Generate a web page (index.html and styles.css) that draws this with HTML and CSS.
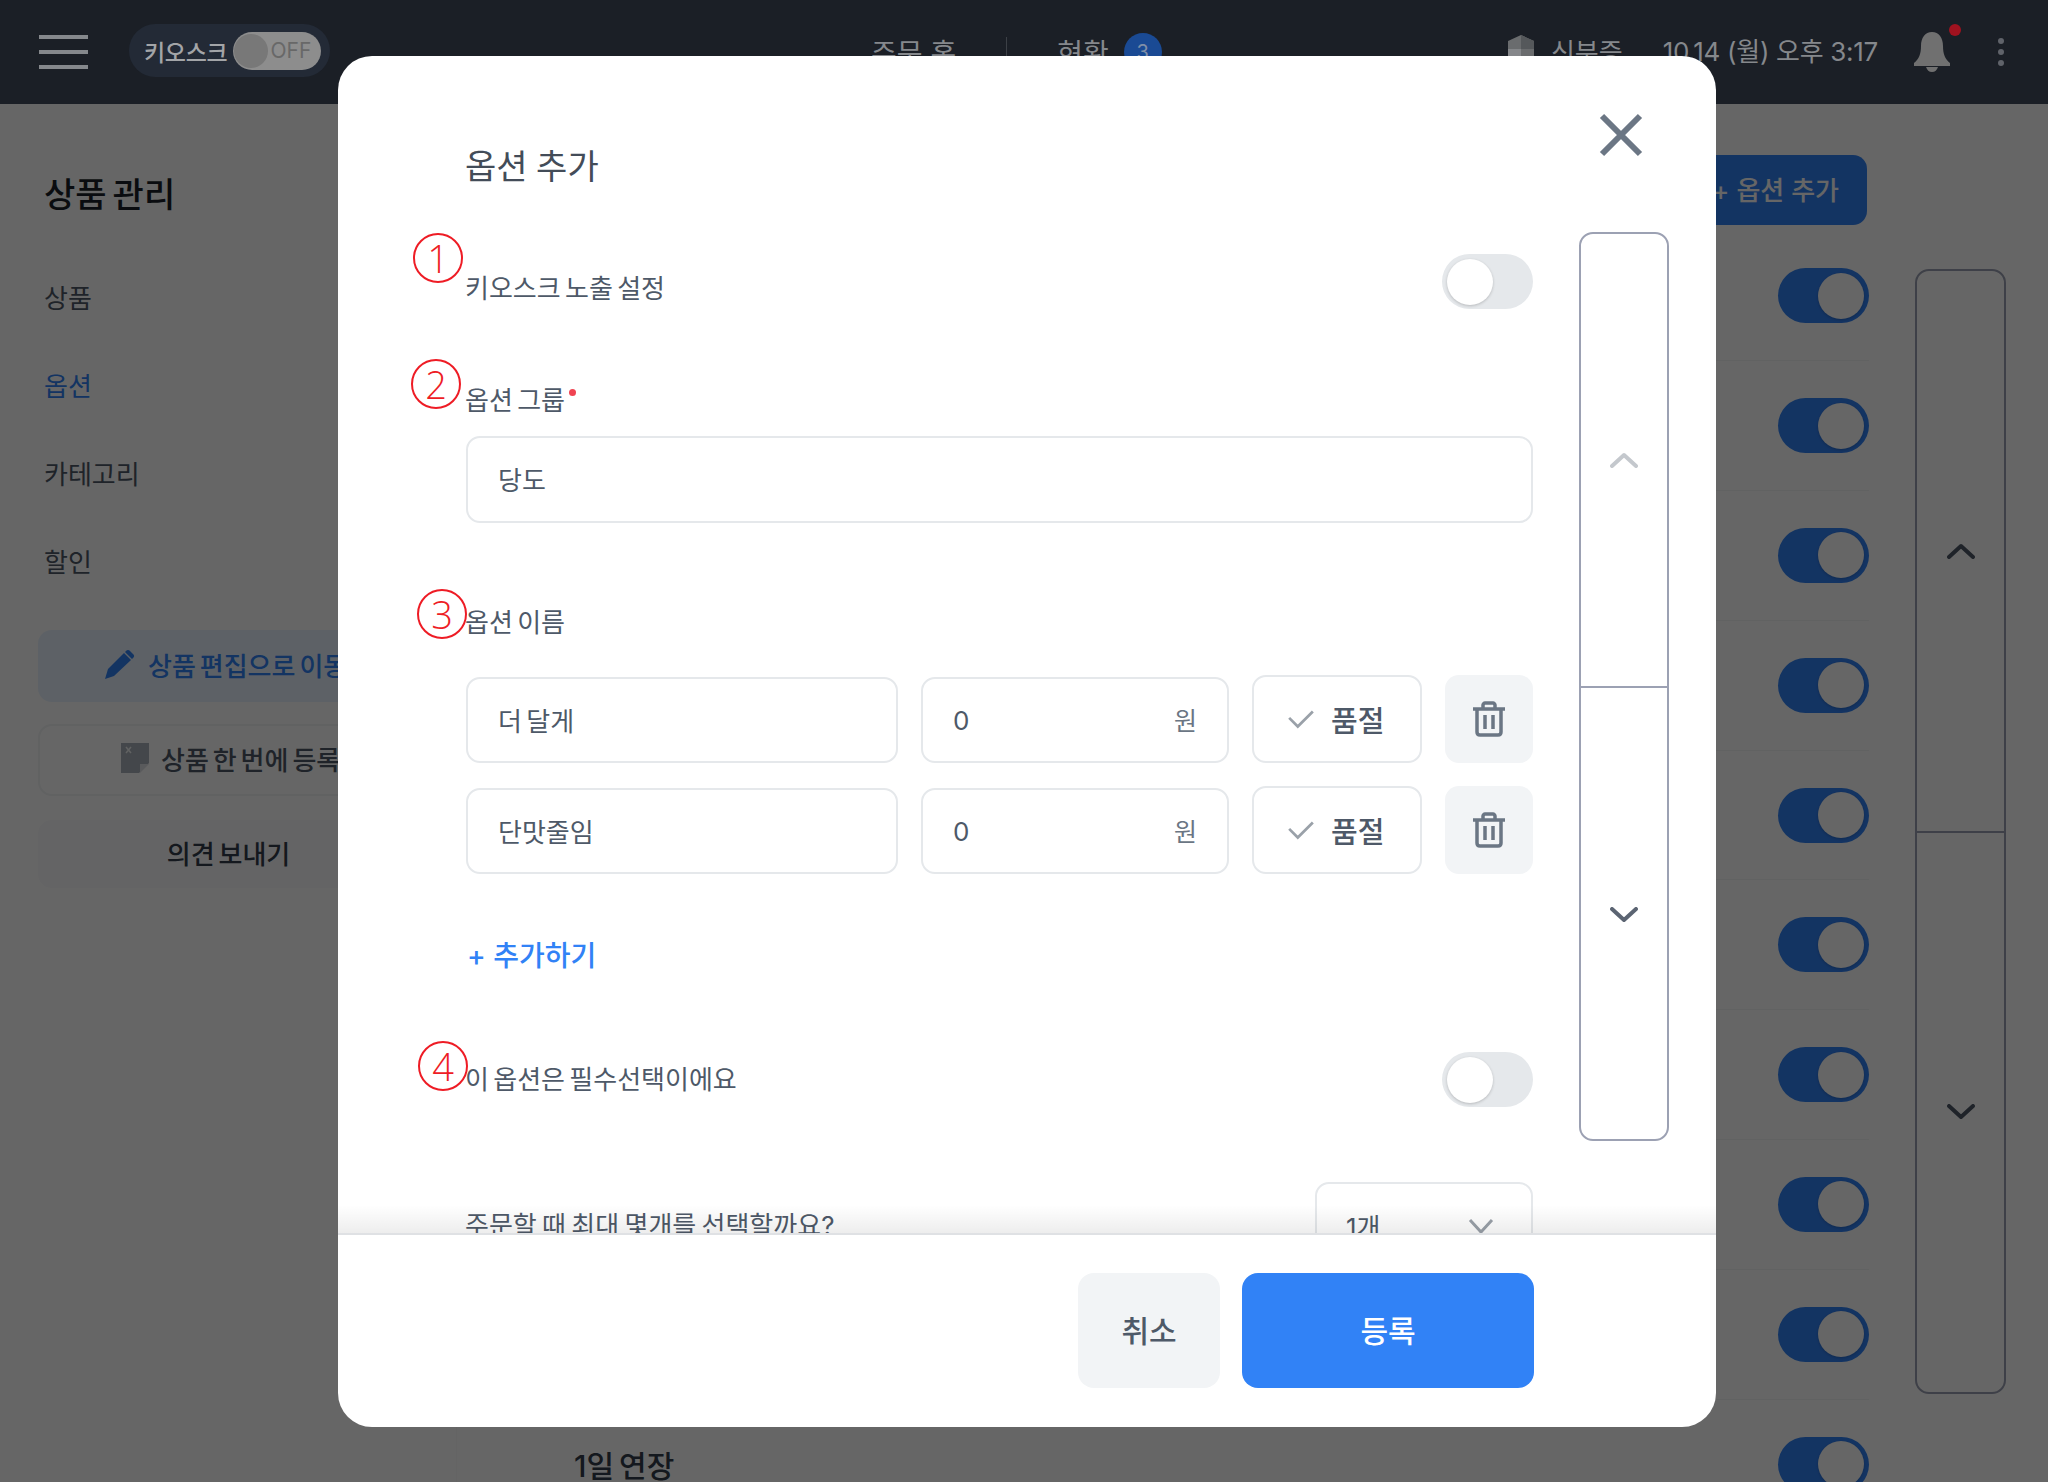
FILE: index.html
```html
<!DOCTYPE html>
<html lang="ko">
<head>
  <meta charset="UTF-8">
  <meta name="viewport" content="width=device-width, initial-scale=1.0">
  <title>옵션 추가</title>
  <link rel="stylesheet" href="styles.css">
</head>
<body>
  <div class="page">
    <header class="topbar">
      <div class="topbar-left">
        <div class="menu-icon"><span></span><span></span><span></span></div>
        <div class="kiosk-pill">
          <span class="kiosk-label">키오스크</span>
          <span class="kiosk-switch"><span class="kiosk-knob"></span><span class="kiosk-off">OFF</span></span>
        </div>
      </div>
      <nav class="topbar-center">
        <span class="nav-item">주문 홈</span>
        <span class="nav-sep"></span>
        <span class="nav-item">현황</span>
        <span class="nav-badge">3</span>
      </nav>
      <div class="topbar-right">
        <svg class="store-icon" viewBox="0 0 26 30">
          <path d="M13 0 26 6v16l-13 8L0 22V6z" fill="#6a6c6e"/>
          <path d="M13 0 26 6v8H13z" fill="#55585b"/>
          <path d="M0 14h13v16L0 22z" fill="#85878a"/>
        </svg>
        <span class="status-text">신분증</span>
        <span class="clock">10.14 (월) 오후 3:17</span>
        <span class="bell">
          <svg viewBox="0 0 38 40">
            <path d="M19 0c7 0 11 6 11 14 0 8 2 13 7 17v3H1v-3c5-4 7-9 7-17C8 6 12 0 19 0z" fill="#707070"/>
            <path d="M13 35h12c-1 3-3 5-6 5s-5-2-6-5z" fill="#707070"/>
          </svg>
          <span class="bell-dot"></span>
        </span>
        <span class="more-dots"><span></span><span></span><span></span></span>
      </div>
    </header>

    <div class="layout">
      <aside class="sidebar">
        <h2 class="side-title">상품 관리</h2>
        <ul class="side-menu">
          <li>상품</li>
          <li class="active">옵션</li>
          <li>카테고리</li>
          <li>할인</li>
        </ul>
        <a class="side-btn side-btn-edit">
          <svg class="side-icon-pen" viewBox="0 0 30 30">
            <path d="M19 4 26 11 9 27 0 30 3 20z" fill="#3182f6"/>
            <path d="M21 2c1-1.500 3-1.500 4 0l3 3c1.500 1 1.500 3 0 4l-1 1-7-7z" fill="#3182f6"/>
          </svg>
          상품 편집으로 이동
        </a>
        <a class="side-btn side-btn-bulk">
          <svg class="side-icon-doc" viewBox="0 0 28 30">
            <path d="M0 0h28v20l-10 10H0z" fill="#aab2bb"/>
            <path d="M19 30V21h9z" fill="#dfe2e6"/>
            <path d="M5 4l5 6M10 4l-5 6" stroke="#f2f4f6" stroke-width="1.500"/>
          </svg>
          상품 한 번에 등록
        </a>
        <a class="side-btn side-btn-send">의견 보내기</a>
      </aside>

      <main class="content">
        <div class="content-list">
          <div class="list-head"><button class="add-btn">+ 옵션 추가</button></div>
          <div class="item-row"><span class="switch on"><i></i></span></div>
          <div class="item-row"><span class="switch on"><i></i></span></div>
          <div class="item-row"><span class="switch on"><i></i></span></div>
          <div class="item-row"><span class="switch on"><i></i></span></div>
          <div class="item-row"><span class="switch on"><i></i></span></div>
          <div class="item-row"><span class="switch on"><i></i></span></div>
          <div class="item-row"><span class="switch on"><i></i></span></div>
          <div class="item-row"><span class="switch on"><i></i></span></div>
          <div class="item-row"><span class="switch on"><i></i></span></div>
          <div class="item-row"><span class="item-name">1일 연장</span><span class="switch on"><i></i></span></div>
        </div>
        <div class="scroller scroller-page">
          <div class="scroller-part">
            <svg class="chevron chevron-dark" viewBox="0 0 28 16"><path d="M2 14 14 3l12 11"/></svg>
          </div>
          <div class="scroller-part">
            <svg class="chevron chevron-dark" viewBox="0 0 28 16"><path d="M2 2l12 11L26 2"/></svg>
          </div>
        </div>
      </main>
    </div>

    <div class="dim"></div>

    <section class="modal">
      <div class="modal-body">
        <form class="modal-form">
          <h1 class="modal-title">옵션 추가</h1>

          <div class="form-row form-row-first">
            <label class="form-label label-low">키오스크 노출 설정</label>
            <span class="switch"><i></i></span>
          </div>

          <label class="form-label group-label">옵션 그룹<span class="required"></span></label>
          <input class="field field-group" type="text" value="당도">

          <label class="form-label name-label">옵션 이름</label>
          <div class="option-row">
            <input class="field field-name" type="text" value="더 달게">
            <div class="field field-price"><span>0</span><span class="won">원</span></div>
            <button type="button" class="soldout-btn">
              <svg viewBox="0 0 26 18"><path d="M2 8l8 8L24 2"/></svg>
              품절
            </button>
            <button type="button" class="trash-btn">
              <svg viewBox="0 0 34 36">
                <path d="M11 7V4c0-1 1-2 2-2h8c1 0 2 1 2 2v3M1 8h32M5 9v22c0 2 1 3 3 3h18c2 0 3-1 3-3V9M13 14v14M21 14v14"/>
              </svg>
            </button>
          </div>
          <div class="option-row">
            <input class="field field-name" type="text" value="단맛줄임">
            <div class="field field-price"><span>0</span><span class="won">원</span></div>
            <button type="button" class="soldout-btn">
              <svg viewBox="0 0 26 18"><path d="M2 8l8 8L24 2"/></svg>
              품절
            </button>
            <button type="button" class="trash-btn">
              <svg viewBox="0 0 34 36">
                <path d="M11 7V4c0-1 1-2 2-2h8c1 0 2 1 2 2v3M1 8h32M5 9v22c0 2 1 3 3 3h18c2 0 3-1 3-3V9M13 14v14M21 14v14"/>
              </svg>
            </button>
          </div>

          <a class="add-link">+ 추가하기</a>

          <div class="form-row form-row-required">
            <label class="form-label">이 옵션은 필수선택이에요</label>
            <span class="switch"><i></i></span>
          </div>

          <div class="form-row form-row-max">
            <label class="form-label">주문할 때 최대 몇개를 선택할까요?</label>
            <div class="field field-select">
              <span>1개</span>
              <svg viewBox="0 0 26 16"><path d="M2 2l11 12L24 2"/></svg>
            </div>
          </div>
        </form>

        <div class="scroller scroller-modal">
          <div class="scroller-part">
            <svg class="chevron chevron-light" viewBox="0 0 28 16"><path d="M2 14 14 3l12 11"/></svg>
          </div>
          <div class="scroller-part">
            <svg class="chevron chevron-slate" viewBox="0 0 28 16"><path d="M2 2l12 11L26 2"/></svg>
          </div>
        </div>
        <div class="modal-fade"></div>
      </div>

      <footer class="modal-footer">
        <button class="footer-btn btn-cancel">취소</button>
        <button class="footer-btn btn-submit">등록</button>
      </footer>

      <button class="modal-close">
        <svg viewBox="0 0 44 44"><path d="M3 3l38 38M41 3 3 41"/></svg>
      </button>

      <!-- red numbered marks drawn over the form -->
      <span class="mark mark-1">1</span>
      <span class="mark mark-2">2</span>
      <span class="mark mark-3">3</span>
      <span class="mark mark-4">4</span>
    </section>
  </div>
</body>
</html>
```

FILE: styles.css
```css
* {
  box-sizing: border-box;
}
body {
  margin: 0;
  font-family: Inter, "Noto Sans CJK KR", sans-serif;
  color: #333d4b;
  background-color: #fff;
  word-spacing: -3px;
}
button, input {
  font-family: inherit;
  word-spacing: inherit;
}
.page {
  position: relative;
  width: 2048px;
  height: 1482px;
  overflow: hidden;
}

/* top bar */
.topbar {
  display: flex;
  align-items: center;
  height: 104px;
  background-color: #1b1f26;
  color: #85888c;
  font-size: 26px;
}
.topbar-left {
  display: flex;
  align-items: center;
  gap: 41px;
  padding-left: 39px;
}
.menu-icon {
  display: flex;
  flex-direction: column;
  gap: 11px;
  width: 49px;
}
.menu-icon span {
  height: 4px;
  background-color: #85888c;
}
.kiosk-pill {
  display: flex;
  align-items: center;
  gap: 6px;
  width: 201px;
  height: 53px;
  margin-bottom: 3px;
  padding-left: 15px;
  border-radius: 27px;
  background-color: #232a36;
}
.kiosk-label {
  font-size: 23px;
  font-weight: 500;
  letter-spacing: -0.3px;
  color: #a3a5a8;
  white-space: nowrap;
}
.kiosk-switch {
  display: flex;
  align-items: center;
  gap: 2px;
  width: 88px;
  height: 38px;
  padding-left: 1px;
  border-radius: 19px;
  background-color: #8d8d8d;
}
.kiosk-knob {
  width: 34px;
  height: 34px;
  border-radius: 50%;
  background-color: #787878;
}
.kiosk-off {
  font-size: 21px;
  color: #686868;
}
.topbar-center {
  display: flex;
  align-items: center;
  margin-left: 541px;
  font-size: 28px;
  word-spacing: 0;
}
.nav-item {
  white-space: nowrap;
}
.nav-sep {
  width: 1px;
  height: 30px;
  margin: 0 50px;
  background-color: #3c4046;
}
.nav-badge {
  width: 38px;
  height: 38px;
  margin-left: 15px;
  border-radius: 50%;
  background-color: #1a4a94;
  color: #7f8fa8;
  font-size: 20px;
  line-height: 38px;
  text-align: center;
}
.topbar-right {
  display: flex;
  align-items: center;
  margin-left: auto;
  padding-right: 44px;
}
.store-icon {
  width: 26px;
  height: 30px;
  margin: 0 2px 4px -2px;
}
.status-text {
  margin-left: 15px;
  padding-bottom: 4px;
}
.clock {
  margin-left: 40px;
  padding-bottom: 5px;
  letter-spacing: -0.3px;
  word-spacing: 0;
  white-space: nowrap;
}
.bell {
  position: relative;
  display: block;
  width: 38px;
  height: 40px;
  margin-left: 35px;
}
.bell svg {
  display: block;
  width: 38px;
  height: 40px;
}
.bell-dot {
  position: absolute;
  top: -8px;
  right: -10px;
  width: 12px;
  height: 12px;
  border-radius: 50%;
  background-color: #a0121f;
}
.more-dots {
  display: flex;
  flex-direction: column;
  gap: 5px;
  margin-left: 47px;
}
.more-dots span {
  width: 6px;
  height: 6px;
  border-radius: 50%;
  background-color: #60636a;
}

/* page underneath */
.layout {
  display: flex;
  height: 1378px;
}
.sidebar {
  flex: none;
  width: 457px;
  padding: 68px 38px 0;
  border-right: 1px solid #f9fafb;
}
.side-title {
  margin: 0 0 0 6px;
  font-size: 34px;
  font-weight: 500;
  line-height: 46px;
  color: #191f28;
}
.side-menu {
  margin: 63px 0 0 6px;
  padding: 0;
  list-style: none;
  font-size: 26px;
  color: #4e5968;
}
.side-menu li {
  height: 88px;
  line-height: 36px;
}
.side-menu li:last-child {
  height: 85px;
}
.side-menu li.active {
  color: #3182f6;
}
.side-btn {
  display: flex;
  align-items: center;
  width: 381px;
  padding-bottom: 4px;
  font-size: 26px;
  font-weight: 500;
  white-space: nowrap;
}
.side-btn-edit {
  height: 72px;
  padding-left: 67px;
  border-radius: 14px;
  background-color: #e8f3ff;
  color: #3182f6;
}
.side-icon-pen {
  width: 30px;
  height: 30px;
  margin-right: 13px;
}
.side-btn-bulk {
  height: 72px;
  margin-top: 22px;
  padding-left: 81px;
  border: 2px solid #f2f4f6;
  border-radius: 14px;
  color: #4e5968;
}
.side-icon-doc {
  width: 28px;
  height: 30px;
  margin-right: 12px;
}
.side-btn-send {
  justify-content: center;
  height: 68px;
  margin-top: 24px;
  border-radius: 14px;
  background-color: #fbfbfc;
  color: #333d4b;
}
.content {
  display: flex;
  flex: 1;
  align-items: flex-start;
  min-width: 0;
}
.content-list {
  flex: 1;
  min-width: 0;
  padding-top: 51px;
}
.list-head {
  display: flex;
  justify-content: flex-end;
  height: 76.5px;
}
.add-btn {
  height: 70px;
  margin-right: 2px;
  padding: 0 28px 4px;
  border: none;
  border-radius: 14px;
  background-color: #3182f6;
  color: #fff;
  font-size: 26px;
  font-weight: 500;
  word-spacing: 0;
}
.item-row {
  display: flex;
  align-items: center;
  justify-content: space-between;
  height: 129.8px;
  padding-left: 117px;
  border-bottom: 1px solid #f2f4f6;
  font-size: 30px;
  font-weight: 500;
  color: #333d4b;
}
.item-name {
  margin-right: auto;
}
.item-row > .switch:first-child {
  margin-left: auto;
}
.scroller {
  flex: none;
  display: flex;
  flex-direction: column;
  border: 2px solid #9ca1b3;
  border-radius: 14px;
}
.scroller-part {
  display: flex;
  flex: 1;
  align-items: center;
  justify-content: center;
}
.scroller-part + .scroller-part {
  border-top: 2px solid #9ca1b3;
}
.scroller-page {
  width: 91px;
  height: 1125px;
  margin: 165px 42px 0 46px;
}
.chevron {
  width: 28px;
  height: 16px;
  fill: none;
  stroke-width: 4;
  stroke-linecap: round;
  stroke-linejoin: round;
}
.chevron-dark {
  stroke: #4e5968;
}
.chevron-light {
  stroke: #c4c8cd;
}
.chevron-slate {
  margin-top: 3px;
  stroke: #5b6472;
}

/* switches */
.switch {
  flex: none;
  display: flex;
  align-items: center;
  width: 91px;
  height: 55px;
  padding: 0 5px;
  border-radius: 28px;
  background-color: #e5e8eb;
}
.switch i {
  width: 46px;
  height: 46px;
  border-radius: 50%;
  background-color: #fff;
  box-shadow: 0 1px 3px rgba(0, 0, 0, 0.2);
}
.switch.on {
  justify-content: flex-end;
  background-color: #3182f6;
}

/* modal */
.dim {
  position: absolute;
  top: 104px;
  left: 0;
  right: 0;
  bottom: 0;
  background-color: rgba(0, 0, 0, 0.6);
}
.modal {
  position: absolute;
  top: 56px;
  left: 338px;
  display: flex;
  flex-direction: column;
  width: 1378px;
  height: 1371px;
  border-radius: 34px;
  background-color: #fff;
}
.modal-body {
  position: relative;
  display: flex;
  align-items: flex-start;
  flex: 1;
  min-height: 0;
  overflow: hidden;
  padding-left: 128px;
  border-radius: 34px 34px 0 0;
}
.modal-form {
  flex: none;
  width: 1067px;
  padding-top: 91px;
}
.modal-title {
  margin: 0 0 0 -1px;
  font-size: 34px;
  font-weight: 400;
  line-height: 40px;
  word-spacing: -1px;
  color: #434c58;
}
.form-row {
  display: flex;
  align-items: center;
  justify-content: space-between;
}
.form-row-first {
  margin-top: 67px;
}
.form-label {
  display: block;
  margin-left: -1px;
  font-size: 26px;
  line-height: 34px;
  color: #4e5968;
}
.label-low {
  padding-top: 15px;
}
.group-label {
  margin-top: 75px;
}
.required {
  display: inline-block;
  width: 7px;
  height: 7px;
  margin: 0 0 20px 4px;
  border-radius: 50%;
  background-color: #f04452;
  vertical-align: middle;
}
.field {
  display: block;
  height: 87px;
  padding: 0 30px;
  border: 2px solid #e5e8eb;
  border-radius: 14px;
  background-color: #fff;
  color: #4e5968;
  font-size: 26px;
  outline: none;
}
.field-group {
  width: 100%;
  margin-top: 18px;
  padding-bottom: 2px;
}
.name-label {
  margin-top: 83px;
  margin-bottom: 35px;
}
.option-row {
  display: flex;
  align-items: flex-end;
  gap: 23px;
  height: 88px;
}
.option-row + .option-row {
  margin-top: 23px;
}
.field-name {
  width: 432px;
  height: 86px;
  padding-bottom: 2px;
}
.field-price {
  display: flex;
  align-items: center;
  justify-content: space-between;
  width: 308px;
  height: 86px;
}
.won {
  margin-bottom: 2px;
  font-size: 25px;
  color: #6b7684;
}
.soldout-btn {
  display: flex;
  align-items: center;
  gap: 16px;
  width: 170px;
  height: 88px;
  padding-left: 33px;
  border: 2px solid #e5e8eb;
  border-radius: 14px;
  background-color: #fff;
  color: #4e5968;
  font-size: 29px;
  font-weight: 500;
}
.soldout-btn svg {
  width: 28px;
  height: 20px;
  fill: none;
  stroke: #9aa1a9;
  stroke-width: 2.500;
}
.trash-btn {
  display: flex;
  align-items: center;
  justify-content: center;
  width: 88px;
  height: 88px;
  padding: 0;
  border: none;
  border-radius: 14px;
  background-color: #f2f4f6;
}
.trash-btn svg {
  width: 34px;
  height: 36px;
  fill: none;
  stroke: #6b7684;
  stroke-width: 3.500;
}
.add-link {
  display: block;
  margin-top: 64px;
  padding-left: 1px;
  font-size: 28px;
  font-weight: 500;
  line-height: 36px;
  word-spacing: 0;
  color: #3182f6;
}
.form-row-required {
  margin-top: 78px;
}
.form-row-max {
  margin-top: 75px;
  word-spacing: -2px;
}
.field-select {
  display: flex;
  align-items: center;
  justify-content: space-between;
  width: 218px;
  padding: 0 37px 0 29px;
}
.field-select svg {
  width: 26px;
  height: 16px;
  fill: none;
  stroke: #9aa1a9;
  stroke-width: 3;
}
.scroller-modal {
  width: 90px;
  height: 909px;
  margin: 176px 0 0 46px;
}
.modal-fade {
  position: absolute;
  left: 0;
  right: 0;
  bottom: 0;
  height: 28px;
  background: linear-gradient(rgba(0, 0, 0, 0), rgba(0, 0, 0, 0.07));
}
.modal-footer {
  flex: none;
  display: flex;
  justify-content: flex-end;
  gap: 22px;
  height: 194px;
  padding: 38px 182px 0 0;
  border-top: 2px solid #dfe1e4;
}
.footer-btn {
  height: 115px;
  padding-bottom: 5px;
  border: none;
  border-radius: 16px;
  font-size: 30px;
  font-weight: 500;
}
.btn-cancel {
  width: 142px;
  background-color: #f2f4f6;
  color: #4e5968;
}
.btn-submit {
  width: 292px;
  background-color: #3182f6;
  color: #fff;
}
.modal-close {
  position: absolute;
  top: 57px;
  left: 1261px;
  width: 44px;
  height: 44px;
  padding: 0;
  border: none;
  background: none;
}
.modal-close svg {
  display: block;
  width: 44px;
  height: 44px;
  fill: none;
  stroke: #6b7684;
  stroke-width: 6;
}
.mark {
  position: absolute;
  width: 50px;
  height: 50px;
  border: 2px solid #ee1c25;
  border-radius: 50%;
  color: #ee1c25;
  font-family: "Open Sans", sans-serif;
  font-size: 38px;
  font-weight: 300;
  line-height: 46px;
  text-align: center;
}
.mark-1 {
  top: 177px;
  left: 75px;
}
.mark-2 {
  top: 303px;
  left: 73px;
}
.mark-3 {
  top: 533px;
  left: 79px;
}
.mark-4 {
  top: 985px;
  left: 80px;
}
```
